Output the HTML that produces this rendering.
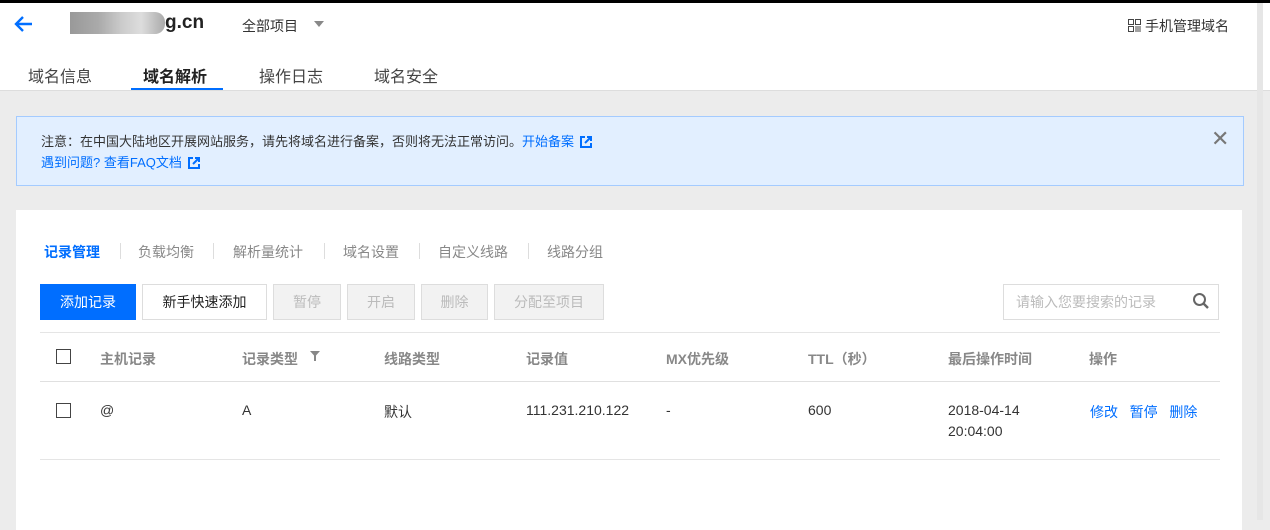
<!DOCTYPE html>
<html><head><meta charset="utf-8"><style>
*{margin:0;padding:0;box-sizing:border-box}
body{width:1270px;height:520px;overflow:hidden;background:#ececec;font-family:"Liberation Sans","Noto Sans CJK SC",sans-serif;font-size:14px;color:#333;position:relative}
.abs{position:absolute;white-space:nowrap}
.top{position:absolute;left:0;top:0;width:1270px;height:3px;background:#000}
.hdr{position:absolute;left:0;top:3px;width:1270px;height:88px;background:#fff;border-bottom:1px solid #ddd}
.blue{color:#006eff}
.notice{position:absolute;left:16px;top:116px;width:1228px;height:70px;background:#e2efff;border:1px solid #a4cbff}
.card{position:absolute;left:16px;top:210px;width:1226px;height:320px;background:#fff}
.btn{position:absolute;top:284px;height:36px;border:1px solid #ddd;text-align:center;line-height:34px;font-size:14px}
.dis{background:#f2f2f2;color:#bbb;border-color:#ddd}
.cb{position:absolute;width:15px;height:15px;border:1px solid #444}
.th{color:#888;font-weight:bold}
.sep{position:absolute;top:243px;width:1px;height:16px;background:#ddd}
.ext{display:inline-block;margin-left:6px;vertical-align:-2px}
</style></head><body>
<div class="top"></div>
<div class="hdr"></div>
<svg class="abs" style="left:14px;top:15px" width="20" height="18" viewBox="0 0 20 18"><path d="M18 9H3M9 2L2 9l7 7" stroke="#006eff" stroke-width="2.4" fill="none"/></svg>
<div class="abs" style="left:70px;top:12px;width:95px;height:22px;background:linear-gradient(90deg,#999 0,#aaa 30%,#ccc 55%,#ddd 75%,#aaa 100%);border-radius:0 10px 10px 0"></div>
<div class="abs" style="left:165px;top:12px;font-size:19px;font-weight:bold;color:#222">g.cn</div>
<div class="abs" style="left:242px;top:16px;font-size:14px;color:#333">全部项目</div>
<div class="abs" style="left:314px;top:21px;width:0;height:0;border-left:5px solid transparent;border-right:5px solid transparent;border-top:6px solid #888"></div>
<svg class="abs" style="left:1128px;top:19px" width="13" height="13" viewBox="0 0 13 13"><rect x="0.5" y="0.5" width="5" height="5" fill="none" stroke="#444"/><rect x="7.5" y="0.5" width="5" height="5" fill="none" stroke="#444"/><rect x="0.5" y="7.5" width="5" height="5" fill="none" stroke="#444"/><path d="M8 7v6M10 7v6M12 7v6" stroke="#444"/></svg>
<div class="abs" style="left:1145px;top:16px;font-size:14px;color:#333">手机管理域名</div>
<div class="abs" style="left:28px;top:63px;font-size:16px;color:#444">域名信息</div>
<div class="abs" style="left:143px;top:63px;font-size:16px;font-weight:bold;color:#222">域名解析</div>
<div class="abs" style="left:131px;top:88px;width:92px;height:2px;background:#006eff"></div>
<div class="abs" style="left:259px;top:63px;font-size:16px;color:#444">操作日志</div>
<div class="abs" style="left:374px;top:63px;font-size:16px;color:#444">域名安全</div>
<div class="abs" style="left:1257px;top:3px;width:6px;height:517px;background:#e6e6e6"></div>

<div class="notice"></div>
<div class="abs" style="left:41px;top:131px;font-size:13px;color:#333">注意：在中国大陆地区开展网站服务，请先将域名进行备案，否则将无法正常访问。<span class="blue">开始备案</span><svg class="ext" width="12" height="12" viewBox="0 0 12 12"><path d="M5 1H1v10h10V7" stroke="#006eff" stroke-width="2" fill="none"/><path d="M7 1h4v4M11 1L5 7" stroke="#006eff" stroke-width="2" fill="none"/></svg></div>
<div class="abs blue" style="left:41px;top:152px;font-size:13px">遇到问题? 查看FAQ文档<svg class="ext" width="12" height="12" viewBox="0 0 12 12"><path d="M5 1H1v10h10V7" stroke="#006eff" stroke-width="2" fill="none"/><path d="M7 1h4v4M11 1L5 7" stroke="#006eff" stroke-width="2" fill="none"/></svg></div>
<div class="abs" style="left:1211px;top:126px;font-size:22px;color:#777">✕</div>

<div class="card"></div>
<div class="abs blue" style="left:44px;top:242px;font-weight:bold">记录管理</div>
<div class="sep" style="left:120px"></div>
<div class="abs" style="left:138px;top:242px;color:#888">负载均衡</div>
<div class="sep" style="left:213px"></div>
<div class="abs" style="left:233px;top:242px;color:#888">解析量统计</div>
<div class="sep" style="left:324px"></div>
<div class="abs" style="left:343px;top:242px;color:#888">域名设置</div>
<div class="sep" style="left:419px"></div>
<div class="abs" style="left:438px;top:242px;color:#888">自定义线路</div>
<div class="sep" style="left:528px"></div>
<div class="abs" style="left:547px;top:242px;color:#888">线路分组</div>

<div class="btn" style="left:40px;width:96px;background:#006eff;border-color:#006eff;color:#fff">添加记录</div>
<div class="btn" style="left:142px;width:125px;background:#fff;color:#222">新手快速添加</div>
<div class="btn dis" style="left:273px;width:68px">暂停</div>
<div class="btn dis" style="left:347px;width:68px">开启</div>
<div class="btn dis" style="left:421px;width:67px">删除</div>
<div class="btn dis" style="left:494px;width:110px">分配至项目</div>
<div class="abs" style="left:1003px;top:284px;width:216px;height:36px;border:1px solid #ddd;background:#fff"></div>
<div class="abs" style="left:1016px;top:292px;font-size:14px;color:#bbb">请输入您要搜索的记录</div>
<svg class="abs" style="left:1192px;top:292px" width="18" height="18" viewBox="0 0 18 18"><circle cx="7.5" cy="7.5" r="5.5" stroke="#666" stroke-width="2" fill="none"/><path d="M11.5 11.5L16 16" stroke="#666" stroke-width="2.4"/></svg>

<div class="abs" style="left:40px;top:332px;width:1180px;height:1px;background:#e5e5e5"></div>
<div class="cb" style="left:56px;top:349px"></div>
<div class="abs th" style="left:100px;top:349px">主机记录</div>
<div class="abs th" style="left:242px;top:349px">记录类型</div>
<svg class="abs" style="left:310px;top:351px" width="10" height="10" viewBox="0 0 10 10"><path d="M0 0h10L6 4.5V10H4V4.5z" fill="#888"/></svg>
<div class="abs th" style="left:384px;top:349px">线路类型</div>
<div class="abs th" style="left:526px;top:349px">记录值</div>
<div class="abs th" style="left:666px;top:349px">MX优先级</div>
<div class="abs th" style="left:808px;top:349px">TTL（秒）</div>
<div class="abs th" style="left:948px;top:349px">最后操作时间</div>
<div class="abs th" style="left:1089px;top:349px">操作</div>
<div class="abs" style="left:40px;top:381px;width:1180px;height:1px;background:#e0e0e0"></div>

<div class="cb" style="left:56px;top:403px"></div>
<div class="abs" style="left:100px;top:402px">@</div>
<div class="abs" style="left:242px;top:402px">A</div>
<div class="abs" style="left:384px;top:402px">默认</div>
<div class="abs" style="left:526px;top:402px">111.231.210.122</div>
<div class="abs" style="left:666px;top:402px">-</div>
<div class="abs" style="left:808px;top:402px">600</div>
<div class="abs" style="left:948px;top:400px;line-height:21px">2018-04-14<br>20:04:00</div>
<div class="abs blue" style="left:1090px;top:402px">修改&nbsp;&nbsp;&nbsp;暂停&nbsp;&nbsp;&nbsp;删除</div>
<div class="abs" style="left:40px;top:459px;width:1180px;height:1px;background:#e5e5e5"></div>
</body></html>
